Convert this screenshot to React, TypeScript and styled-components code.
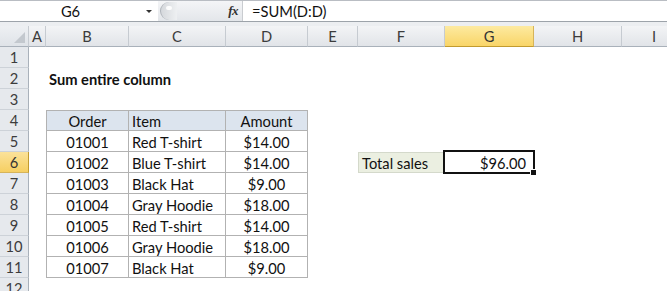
import React from "react";
import styled, { createGlobalStyle, css } from "styled-components";

const GlobalStyle = createGlobalStyle`
  html, body { margin: 0; padding: 0; background: #ffffff; overflow: hidden; }
  body { font-family: Lato, "Open Sans", sans-serif; }
`;

const COLS = [
  { id: "A", w: 17 },
  { id: "B", w: 83 },
  { id: "C", w: 97 },
  { id: "D", w: 82 },
  { id: "E", w: 50 },
  { id: "F", w: 87 },
  { id: "G", w: 89 },
  { id: "H", w: 88 },
  { id: "I", w: 65 },
];
const ROW_H = 21;
const HEADER_W = 29;

const Page = styled.div`
  width: 667px;
  height: 291px;
  overflow: hidden;
  display: flex;
  flex-direction: column;
  background: #fff;
  & > * { flex-shrink: 0; }
`;

const FormulaBar = styled.div`
  display: flex;
  align-items: stretch;
  height: 20px;
  border-top: 1px solid #b9bdc3;
  border-bottom: 1px solid #9da3aa;
  background: #fff;
  font-size: 14.7px;
  color: #111;
`;

const NameBox = styled.div`
  width: 158px;
  position: relative;
  display: flex;
  align-items: center;
  justify-content: center;
  padding-right: 17px;
  box-sizing: border-box;
  background: #fff;
`;

const DropArrow = styled.span`
  position: absolute;
  right: 6px;
  top: 9px;
  width: 0;
  height: 0;
  border-left: 3px solid transparent;
  border-right: 3px solid transparent;
  border-top: 3px solid #333;
`;

const FxArea = styled.div`
  width: 85px;
  display: flex;
  align-items: center;
  justify-content: flex-end;
  padding-right: 4px;
  box-sizing: border-box;
  background: linear-gradient(#f4f5f7, #e3e6ea);
  border-right: 1px solid #c9ccd0;
  position: relative;
`;

const Pill = styled.div`
  position: absolute;
  left: 2px;
  top: 1px;
  width: 16px;
  height: 18px;
  border-radius: 9px 0 0 9px;
  border-left: 1px solid #aeb3b9;
  background: linear-gradient(90deg, #d5d8dc, #eef0f2);
  &::after {
    content: "";
    position: absolute;
    left: 5px;
    top: 4px;
    width: 6px;
    height: 4px;
    border-radius: 3px;
    background: #fff;
    opacity: 0.9;
  }
`;

const FxLabel = styled.span`
  font-family: "Liberation Serif", serif;
  font-style: italic;
  font-weight: bold;
  font-size: 13px;
  color: #333;
  letter-spacing: -0.5px;
`;

const FormulaInput = styled.div`
  flex: 1;
  display: flex;
  align-items: center;
  padding-left: 9px;
  background: #fff;
`;

const Band = styled.div`
  height: 4px;
  background: #eceef1;
`;

const Grid = styled.div`
  display: grid;
  grid-template-columns: ${HEADER_W}px ${COLS.map((c) => `${c.w}px`).join(" ")};
  grid-auto-rows: ${ROW_H}px;
  font-size: 14.7px;
  color: #111;
`;

const Corner = styled.div`
  position: relative;
  background: linear-gradient(#eef0f3, #dfe3e8);
  border-right: 1px solid #c6cbd1;
  border-bottom: 1px solid #a9b1ba;
  box-sizing: border-box;
  &::after {
    content: "";
    position: absolute;
    right: 3px;
    bottom: 3px;
    width: 0;
    height: 0;
    border-left: 11px solid transparent;
    border-bottom: 11px solid #c3c8ce;
  }
`;

const ColHeader = styled.div<{ $active?: boolean }>`
  display: flex;
  align-items: center;
  justify-content: center;
  box-sizing: border-box;
  color: #3c3c3c;
  border-right: 1px solid #c6cbd1;
  border-bottom: 1px solid #a9b1ba;
  background: linear-gradient(#f3f4f6, #e1e4e8);
  ${(p) =>
    p.$active &&
    css`
      background: linear-gradient(#fdeaa0, #f9d568);
      border-right-color: #d6b45a;
      border-bottom: 1px solid #c29b2f;
      color: #333;
    `}
`;

const RowHeader = styled.div<{ $active?: boolean }>`
  display: flex;
  align-items: center;
  justify-content: center;
  box-sizing: border-box;
  color: #3c3c3c;
  background: #e6e9ed;
  border-right: 1px solid #a9b1ba;
  border-bottom: 1px solid #cdd2d8;
  ${(p) =>
    p.$active &&
    css`
      background: linear-gradient(#fbe29a, #f6cf62);
      border-right-color: #c29b2f;
      border-bottom-color: #d6b45a;
      color: #333;
    `}
`;

type Align = "left" | "center" | "right";

const Cell = styled.div<{
  $align?: Align;
  $bold?: boolean;
  $fill?: string;
  $bt?: boolean;
  $bl?: boolean;
  $box?: boolean;
  $borderColor?: string;
  $padRight?: number;
}>`
  position: relative;
  display: flex;
  align-items: center;
  box-sizing: border-box;
  padding: 1px ${(p) => p.$padRight ?? 3}px 0 3px;
  white-space: nowrap;
  overflow: visible;
  justify-content: ${(p) =>
    p.$align === "center" ? "center" : p.$align === "right" ? "flex-end" : "flex-start"};
  font-weight: ${(p) => (p.$bold ? 700 : 400)};
  background: ${(p) => p.$fill || "transparent"};
  ${(p) =>
    p.$box &&
    css`
      border-right: 1px solid ${p.$borderColor || "#b2b2b2"};
      border-bottom: 1px solid ${p.$borderColor || "#b2b2b2"};
    `}
  ${(p) =>
    p.$bt &&
    css`
      border-top: 1px solid ${p.$borderColor || "#b2b2b2"};
    `}
  ${(p) =>
    p.$bl &&
    css`
      border-left: 1px solid ${p.$borderColor || "#b2b2b2"};
    `}
`;

const Title = styled.span`
  position: relative;
  z-index: 1;
`;

const Selection = styled.div`
  position: absolute;
  left: -2px;
  top: -2px;
  right: -1px;
  bottom: -1px;
  border: 2px solid #111;
  pointer-events: none;
  z-index: 2;
`;

const FillHandle = styled.div`
  position: absolute;
  right: -3px;
  bottom: -3px;
  width: 5px;
  height: 5px;
  background: #111;
  border: 1px solid #fff;
  z-index: 3;
`;

type CellDef = {
  text: string;
  align?: Align;
  bold?: boolean;
  fill?: string;
  box?: boolean;
  bt?: boolean;
  bl?: boolean;
  borderColor?: string;
  selected?: boolean;
  padRight?: number;
};

const orders: [string, string, string][] = [
  ["01001", "Red T-shirt", "$14.00"],
  ["01002", "Blue T-shirt", "$14.00"],
  ["01003", "Black Hat", "$9.00"],
  ["01004", "Gray Hoodie", "$18.00"],
  ["01005", "Red T-shirt", "$14.00"],
  ["01006", "Gray Hoodie", "$18.00"],
  ["01007", "Black Hat", "$9.00"],
];

function buildCells(): Record<string, CellDef> {
  const cells: Record<string, CellDef> = {};
  cells["B2"] = { text: "Sum entire column", bold: true };
  const head = "#dce4ee";
  cells["B4"] = { text: "Order", align: "center", fill: head, box: true, bt: true, bl: true };
  cells["C4"] = { text: "Item", align: "left", fill: head, box: true, bt: true };
  cells["D4"] = { text: "Amount", align: "center", fill: head, box: true, bt: true };
  orders.forEach(([o, item, amt], i) => {
    const r = 5 + i;
    cells[`B${r}`] = { text: o, align: "center", box: true, bl: true };
    cells[`C${r}`] = { text: item, align: "left", box: true };
    cells[`D${r}`] = { text: amt, align: "center", box: true };
  });
  cells["F6"] = {
    text: "Total sales",
    align: "left",
    fill: "#ebefe1",
    box: true,
    bt: true,
    bl: true,
    borderColor: "#d4d9cb",
  };
  cells["G6"] = { text: "$96.00", align: "right", selected: true, padRight: 8 };
  return cells;
}

const ROWS = 12;

export default function App() {
  const cells = buildCells();
  return (
    <Page>
      <GlobalStyle />
      <FormulaBar>
        <NameBox>
          G6
          <DropArrow />
        </NameBox>
        <FxArea>
          <Pill />
          <FxLabel>fx</FxLabel>
        </FxArea>
        <FormulaInput>=SUM(D:D)</FormulaInput>
      </FormulaBar>
      <Band />
      <Grid>
        <Corner />
        {COLS.map((c) => (
          <ColHeader key={c.id} $active={c.id === "G"}>
            {c.id}
          </ColHeader>
        ))}
        {Array.from({ length: ROWS }, (_, ri) => {
          const r = ri + 1;
          return (
            <React.Fragment key={r}>
              <RowHeader $active={r === 6}>{r}</RowHeader>
              {COLS.map((c) => {
                const def = cells[`${c.id}${r}`];
                if (!def) return <Cell key={c.id} />;
                return (
                  <Cell
                    key={c.id}
                    $align={def.align}
                    $bold={def.bold}
                    $fill={def.fill}
                    $box={def.box}
                    $bt={def.bt}
                    $bl={def.bl}
                    $borderColor={def.borderColor}
                    $padRight={def.padRight}
                  >
                    <Title>{def.text}</Title>
                    {def.selected && (
                      <>
                        <Selection />
                        <FillHandle />
                      </>
                    )}
                  </Cell>
                );
              })}
            </React.Fragment>
          );
        })}
      </Grid>
    </Page>
  );
}
